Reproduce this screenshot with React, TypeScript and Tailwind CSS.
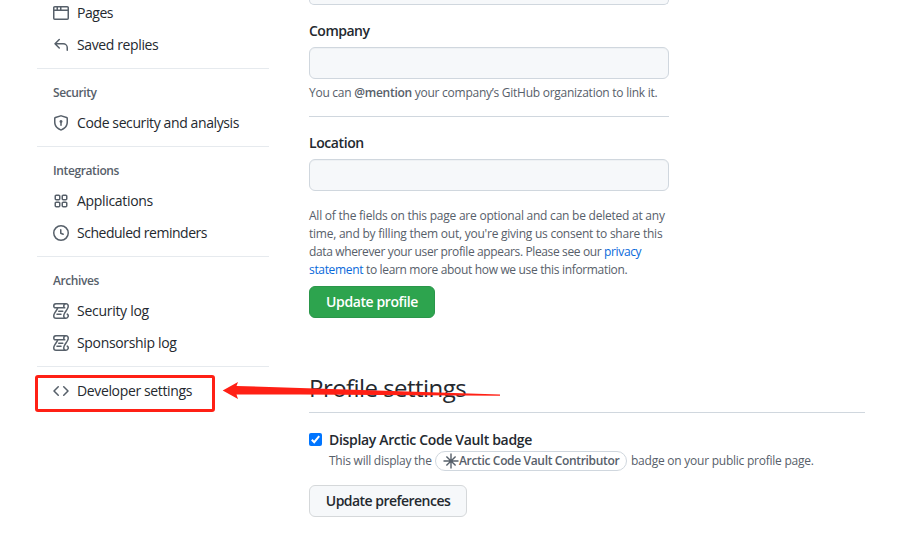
import React from "react";

const PATHS = {
  browser:
    "M0 2.75C0 1.784.784 1 1.75 1h12.5c.966 0 1.75.784 1.75 1.75v10.5A1.75 1.75 0 0114.25 15H1.75A1.75 1.75 0 010 13.25V2.75zm1.75-.25a.25.25 0 00-.25.25V4.5h2v-2H1.75zM5 2.5v2h2v-2H5zm3.5 0v2h6V2.75a.25.25 0 00-.25-.25H8.5zm6 3.5h-13v7.25c0 .138.112.25.25.25h12.5a.25.25 0 00.25-.25V6z",
  reply:
    "M6.78 1.97a.75.75 0 010 1.06L3.81 6h6.44A4.75 4.75 0 0115 10.75v2.5a.75.75 0 01-1.5 0v-2.5a3.25 3.25 0 00-3.25-3.25H3.81l2.97 2.97a.75.75 0 11-1.06 1.06L1.47 7.28a.75.75 0 010-1.06l4.25-4.25a.75.75 0 011.06 0z",
  shield:
    "M8.533.133a1.75 1.75 0 00-1.066 0l-5.25 1.68A1.75 1.75 0 001 3.48V7c0 1.566.32 3.182 1.303 4.682.983 1.498 2.585 2.813 5.032 3.855a1.7 1.7 0 001.33 0c2.447-1.042 4.049-2.357 5.032-3.855C14.68 10.182 15 8.566 15 7V3.48a1.75 1.75 0 00-1.217-1.667L8.533.133zm-.61 1.429a.25.25 0 01.153 0l5.25 1.68a.25.25 0 01.174.238V7c0 1.358-.275 2.666-1.057 3.86-.784 1.194-2.121 2.34-4.366 3.297a.2.2 0 01-.154 0c-2.245-.956-3.582-2.104-4.366-3.298C2.775 9.666 2.5 8.36 2.5 7V3.48a.25.25 0 01.174-.237l5.25-1.68zM9.5 6.5a1.5 1.5 0 01-.75 1.3v2.45a.75.75 0 01-1.5 0V7.8A1.5 1.5 0 119.5 6.5z",
  apps:
    "M1.5 3.25c0-.966.784-1.75 1.75-1.75h2.5c.966 0 1.75.784 1.75 1.75v2.5A1.75 1.75 0 015.75 7.5h-2.5A1.75 1.75 0 011.5 5.75v-2.5zM3.25 3a.25.25 0 00-.25.25v2.5c0 .138.112.25.25.25h2.5A.25.25 0 006 5.75v-2.5A.25.25 0 005.75 3h-2.5zM8.5 3.25c0-.966.784-1.75 1.75-1.75h2.5c.966 0 1.75.784 1.75 1.75v2.5a1.75 1.75 0 01-1.75 1.75h-2.5A1.75 1.75 0 018.5 5.75v-2.5zM10.25 3a.25.25 0 00-.25.25v2.5c0 .138.112.25.25.25h2.5a.25.25 0 00.25-.25v-2.5a.25.25 0 00-.25-.25h-2.5zM1.5 10.25c0-.966.784-1.75 1.75-1.75h2.5c.966 0 1.75.784 1.75 1.75v2.5a1.75 1.75 0 01-1.75 1.75h-2.5a1.75 1.75 0 01-1.75-1.75v-2.5zM3.25 10a.25.25 0 00-.25.25v2.5c0 .138.112.25.25.25h2.5a.25.25 0 00.25-.25v-2.5a.25.25 0 00-.25-.25h-2.5zM8.5 10.25c0-.966.784-1.75 1.75-1.75h2.5c.966 0 1.75.784 1.75 1.75v2.5a1.75 1.75 0 01-1.75 1.75h-2.5a1.75 1.75 0 01-1.75-1.75v-2.5zM10.25 10a.25.25 0 00-.25.25v2.5c0 .138.112.25.25.25h2.5a.25.25 0 00.25-.25v-2.5a.25.25 0 00-.25-.25h-2.5z",
  clock:
    "M1.5 8a6.5 6.5 0 1113 0 6.5 6.5 0 01-13 0zM8 0a8 8 0 100 16A8 8 0 008 0zm.5 4.75a.75.75 0 00-1.5 0v3.5a.75.75 0 00.471.696l2.5 1a.75.75 0 00.557-1.392L8.5 7.742V4.75z",
  log:
    "M5 8.25a.75.75 0 01.75-.75h4a.75.75 0 010 1.5h-4A.75.75 0 015 8.25zM4 10.5A.75.75 0 004 12h4a.75.75 0 000-1.5H4zM13-.005c1.654 0 3 1.328 3 3 0 .982-.338 1.933-.783 2.818-.443.879-1.028 1.758-1.582 2.588l-.011.017c-.568.853-1.104 1.659-1.501 2.446-.398.789-.623 1.494-.623 2.136a1.5 1.5 0 102.333-1.248.75.75 0 01.834-1.246A3 3 0 0113 16H3a3 3 0 01-3-3c0-1.582.891-3.135 1.777-4.506.209-.322.418-.637.623-.946.473-.709.923-1.386 1.287-2.048H2.51c-.576 0-1.381-.133-1.907-.783A2.68 2.68 0 010 2.995a3 3 0 013-3h10zm0 1.5a1.5 1.5 0 00-1.5 1.5c0 .476.223.834.667 1.132A.75.75 0 0111.75 5.5H5.368c-.467 1.003-1.141 2.015-1.773 2.963-.192.289-.381.571-.558.845C2.13 10.711 1.5 11.916 1.5 13A1.5 1.5 0 003 14.5h7.401A2.989 2.989 0 0110 13c0-.979.338-1.928.784-2.812.441-.874 1.023-1.748 1.575-2.576l.017-.026c.568-.853 1.103-1.658 1.501-2.448.398-.79.623-1.497.623-2.143 0-.838-.669-1.5-1.5-1.5zm-10 0a1.5 1.5 0 00-1.5 1.5c0 .321.1.569.27.778.097.12.325.227.74.227h7.674A2.737 2.737 0 0110 2.995c0-.546.146-1.059.401-1.5H3z",
  code:
    "M4.72 3.22a.75.75 0 011.06 1.06L2.06 8l3.72 3.72a.75.75 0 11-1.06 1.06L.47 8.53a.75.75 0 010-1.06l4.25-4.25zm6.56 0a.75.75 0 10-1.06 1.06L13.94 8l-3.72 3.72a.75.75 0 101.06 1.06l4.25-4.25a.75.75 0 000-1.06l-4.25-4.25z",
};

function NavItem({ icon, label, track }: { icon: keyof typeof PATHS; label: string; track: string }) {
  return (
    <a className="flex h-8 items-center gap-2 pl-4 text-sm text-[#24292f]">
      <svg width="16" height="16" viewBox="0 0 16 16" className="shrink-0 fill-[#57606a]">
        <path fillRule="evenodd" d={PATHS[icon]} />
      </svg>
      <span className={`whitespace-nowrap ${track}`}>{label}</span>
    </a>
  );
}

function NavGroup({ title, track, children }: { title: string; track: string; children: React.ReactNode }) {
  return (
    <section className="mt-[7px] border-t border-[#e6eaee] pt-2">
      <h3 className={`flex h-[30px] items-center pt-[2px] pl-4 text-xs font-semibold text-[#57606a] ${track}`}>{title}</h3>
      {children}
    </section>
  );
}

function Field({ label, track }: { label: string; track: string }) {
  return (
    <label className="block">
      <span className={`block h-[21px] text-sm leading-[19px] font-semibold text-[#24292f] ${track}`}>{label}</span>
      <input className="mt-[5px] block h-8 w-full rounded-md border border-[#d0d7de] bg-[#f6f8fa] shadow-[inset_0_1px_0_rgba(208,215,222,0.2)]" />
    </label>
  );
}

export default function App() {
  return (
    <div className="relative flex h-[558px] w-[903px] overflow-hidden bg-white font-['Open_Sans','Noto_Sans',sans-serif]">
      <nav className="-mt-[3px] ml-[37px] w-[232px] shrink-0">
        <NavItem icon="browser" label="Pages" track="tracking-[-0.45px]" />
        <NavItem icon="reply" label="Saved replies" track="tracking-[-0.38px]" />
        <NavGroup title="Security" track="tracking-[-0.4px]">
          <NavItem icon="shield" label="Code security and analysis" track="tracking-[-0.39px]" />
        </NavGroup>
        <NavGroup title="Integrations" track="tracking-[-0.38px]">
          <NavItem icon="apps" label="Applications" track="tracking-[-0.32px]" />
          <NavItem icon="clock" label="Scheduled reminders" track="tracking-[-0.48px]" />
        </NavGroup>
        <NavGroup title="Archives" track="tracking-[-0.4px]">
          <NavItem icon="log" label="Security log" track="tracking-[-0.28px]" />
          <NavItem icon="log" label="Sponsorship log" track="tracking-[-0.34px]" />
        </NavGroup>
        <div className="mt-[7px] border-t border-[#e6eaee] pt-2">
          <NavItem icon="code" label="Developer settings" track="tracking-[-0.36px]" />
        </div>
      </nav>

      <main className="ml-10 w-[556px] shrink-0">
        <form className="w-[360px]">
          <div className="h-[5px] rounded-b-md border border-t-0 border-[#d0d7de] bg-[#f6f8fa]" />
          <div className="mt-4 border-b border-[#d0d7de] pb-[14px]">
            <Field label="Company" track="tracking-[-0.5px]" />
            <p className="mt-[5px] h-[18px] text-xs leading-[18px] whitespace-nowrap text-[#57606a] tracking-[-0.26px]">
              You can <strong className="font-semibold">@mention</strong> your company’s GitHub organization to link it.
            </p>
          </div>
          <div className="mt-4">
            <Field label="Location" track="tracking-[-0.42px]" />
          </div>
          <p className="mt-4 text-xs leading-[18px] whitespace-nowrap text-[#57606a]">
            <span className="block tracking-[-0.235px]">All of the fields on this page are optional and can be deleted at any</span>
            <span className="block tracking-[-0.24px]">time, and by filling them out, you're giving us consent to share this</span>
            <span className="block tracking-[-0.365px]">
              data wherever your user profile appears. Please see our <a className="text-[#0969da]">privacy</a>
            </span>
            <span className="block tracking-[-0.335px]">
              <a className="text-[#0969da]">statement</a> to learn more about how we use this information.
            </span>
          </p>
          <button
            type="button"
            className="mt-[7px] flex h-8 w-[126px] items-center justify-center rounded-md border border-[#2a964a] bg-[#2da44e] text-sm font-semibold whitespace-nowrap text-white tracking-[-0.4px]"
          >
            Update profile
          </button>
        </form>

        <h2 className="mt-[50px] h-[45px] border-b border-[#d0d7de] text-2xl leading-10 whitespace-nowrap text-[#24292f] tracking-[-0.55px]">
          Profile settings
        </h2>
        <div className="mt-[17px] flex">
          <span className="mt-[3px] flex size-[13px] shrink-0 items-center justify-center rounded-[2px] bg-[#0075ff]">
            <svg width="13" height="13" viewBox="0 0 13 13" fill="none" stroke="white" strokeWidth="2">
              <path d="M2.8 6.8 5.2 9.2 10.2 3.2" />
            </svg>
          </span>
          <div className="ml-[7px]">
            <p className="h-[21px] text-sm leading-[19px] font-semibold whitespace-nowrap text-[#24292f] tracking-[-0.33px]">
              Display Arctic Code Vault badge
            </p>
            <div className="flex h-5 items-center text-xs whitespace-nowrap text-[#57606a]">
              <span className="w-[106px] tracking-[-0.25px]">This will display the</span>
              <span className="flex h-5 w-[192px] items-center rounded-full border border-[#d0d7de] pl-[7px] font-semibold">
                <svg width="16" height="16" viewBox="0 0 16 16" className="shrink-0 stroke-[#57606a]" strokeWidth="1.4">
                  <path d="M8 .5v15M.5 8h15M3.4 3.4l9.2 9.2M12.6 3.4l-9.2 9.2" />
                </svg>
                <span className="tracking-[-0.34px]">Arctic Code Vault Contributor</span>
              </span>
              <span className="ml-1 tracking-[-0.24px]">badge on your public profile page.</span>
            </div>
          </div>
        </div>
        <button
          type="button"
          className="mt-[14px] flex h-8 w-[158px] items-center justify-center rounded-md border border-[#d5d8da] bg-[#f6f8fa] text-sm font-semibold whitespace-nowrap text-[#24292f] tracking-[-0.53px]"
        >
          Update preferences
        </button>
      </main>

      <div className="absolute top-[375px] left-[35px] h-[37px] w-[180px] rounded-[3px] border-[3px] border-[#ff2015]" />
      <svg className="absolute top-[375px] left-[220px] fill-[#ff2015]" width="284" height="32" viewBox="0 0 284 32">
        <path d="M2.700 15.500 18 7l-1.500 4L80 13l200 6.400v1.300L80 19.400l-63.500 0L18 24z" />
      </svg>
    </div>
  );
}
